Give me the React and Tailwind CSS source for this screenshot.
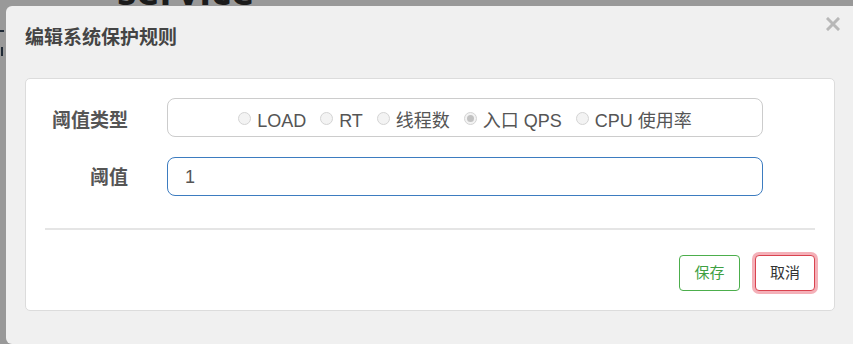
import React from 'react';

const font = { fontFamily: '"Liberation Sans", "Noto Sans CJK SC", Arial, sans-serif' };

const options = [
  { label: 'LOAD', checked: false },
  { label: 'RT', checked: false },
  { label: '线程数', checked: false },
  { label: '入口 QPS', checked: true },
  { label: 'CPU 使用率', checked: false },
];

function Radio({ label, checked }) {
  return (
    <label className="flex items-center gap-[6px] text-[18px] text-[#555]">
      <span className="w-[13px] h-[13px] rounded-full border border-[#d4d4d4] bg-[#f3f3f3] flex items-center justify-center translate-y-[1px]">
        {checked && <span className="w-[7px] h-[7px] rounded-full bg-[#c2c2c2]" />}
      </span>
      <span className="translate-y-[4px]">{label}</span>
    </label>
  );
}

export default function App() {
  return (
    <div className="w-[853px] h-[344px] bg-[#999999] relative overflow-hidden" style={font}>
      {/* page behind the overlay */}
      <div className="absolute left-[117px] top-[-30px] text-[39px] font-bold text-[#1b1b1b] leading-none" style={{ fontFamily: '"Open Sans", "Liberation Sans", sans-serif' }}>
        service
      </div>
      <div className="absolute left-0 top-[30px] w-[4px] h-[2px] bg-[#1f2a36]" />
      <div className="absolute left-[1px] top-[47px] w-[2px] h-[9px] bg-[#1f2a36]" />

      <div className="relative ml-[6px] mt-[6px] w-[860px] h-[338px] bg-[#f0f0f0] rounded-[6px]">
        <div className="h-[72px] pl-[19px] pt-[22px]">
          <h3 className="text-[19px] leading-[20px] font-bold text-[#444]">编辑系统保护规则</h3>
        </div>
        <button className="absolute left-[820px] top-[11px] w-[14px] h-[14px]">
          <svg viewBox="0 0 14 14" className="w-[14px] h-[14px]">
            <path d="M2 2 L12 12 M12 2 L2 12" stroke="#b8b8b8" strokeWidth="3" strokeLinecap="square" />
          </svg>
        </button>

        <div className="ml-[19px] w-[810px] h-[233px] bg-white border border-[#dcdcdc] rounded-[5px] pt-[19px]">
          <div className="flex items-center">
            <div className="w-[102px] text-right text-[19px] font-bold text-[#555] pt-[8px]">阈值类型</div>
            <div className="ml-[39px] w-[596px] h-[39px] border border-[#cccccc] rounded-[8px] flex items-center justify-center gap-[14px]">
              {options.map((o) => (
                <Radio key={o.label} label={o.label} checked={o.checked} />
              ))}
            </div>
          </div>

          <div className="flex items-center mt-[20px]">
            <div className="w-[102px] text-right text-[19px] font-bold text-[#555] pt-[3px]">阈值</div>
            <div className="ml-[39px] w-[596px] h-[39px] border border-[#3d7cc0] rounded-[8px] flex items-center pl-[17px] pt-[2px] text-[18px] text-[#555]">
              1
            </div>
          </div>

          <div className="mx-[19px] mt-[32px] h-[2px] bg-[#e5e5e5]" />

          <div className="flex justify-end items-center pr-[19px] mt-[25px]">
            <button className="w-[61px] h-[36px] border border-[#4cae4c] rounded-[4px] text-[15px] text-[#3ea043] bg-white">
              保存
            </button>
            <button className="ml-[15px] w-[60px] h-[36px] border border-[#d9434f] rounded-[4px] text-[15px] text-[#333] bg-white ring-[3px] ring-[#f4b0b8]">
              取消
            </button>
          </div>
        </div>
      </div>
    </div>
  );
}
